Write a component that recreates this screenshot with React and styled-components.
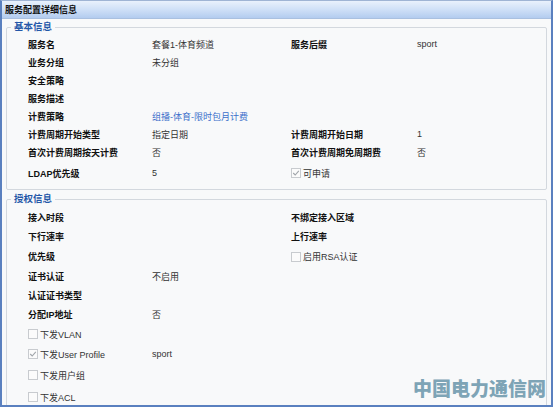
import React from 'react'
import styled, { createGlobalStyle } from 'styled-components'

const GlobalStyle = createGlobalStyle`
  html, body {
    margin: 0;
    padding: 0;
    background: #ffffff;
  }
  body {
    font-family: "Liberation Sans", "Noto Sans CJK SC", sans-serif;
    font-size: 9px;
    color: #222;
  }
`

const Frame = styled.div`
  position: relative;
  width: 553px;
  height: 407px;
  box-sizing: border-box;
  border-left: 2px solid #5a80bf;
  border-right: 2px solid #5a80bf;
  border-bottom: 2px solid #5a80bf;
  border-top: 1px solid #9fb4d4;
  background: #f8f9fa;
  overflow: hidden;
`

const TitleBar = styled.div`
  height: 17px;
  display: flex;
  align-items: center;
  padding-left: 3px;
  background: linear-gradient(to bottom, #e9f1fc 0%, #cfe0f7 50%, #b3ccef 100%);
  border-bottom: 1px solid #a9c0e0;
  font-weight: bold;
  font-size: 9px;
  color: #111;
`

const Body = styled.div`
  padding: 0 4px 0 4px;
`

const Box = styled.fieldset`
  margin: ${p => p.$top}px 0 0 0;
  padding: 0 0 ${p => p.$bottom}px 21px;
  border: 1px solid #d3d8de;
  border-radius: 2px;
  min-width: 0;
`

const Legend = styled.legend`
  padding: 0 3px;
  margin-left: -17px;
  font-weight: bold;
  font-size: 9.5px;
  line-height: 14px;
  color: #2457a8;
`

const Grid = styled.div`
  display: grid;
  grid-template-columns: 124px 139px 126px 1fr;
  padding-top: ${p => p.$top}px;
`

const Row = styled.div`
  display: contents;
`

const Cell = styled.div`
  height: ${p => p.$h}px;
  display: flex;
  align-items: center;
  white-space: nowrap;
`

const Label = styled(Cell)`
  font-weight: bold;
  color: #111;
`

const Value = styled(Cell)`
  color: #333;
`

const LinkValue = styled(Cell)`
  color: #3b6fca;
`

const CheckLine = styled(Cell)`
  color: #333;
  gap: 2px;
`

const Tick = styled.span`
  width: 10px;
  height: 10px;
  box-sizing: border-box;
  border: 1px solid #c8cbcf;
  background: #fbfbfb;
  display: inline-flex;
  align-items: center;
  justify-content: center;
`

const Check = ({ checked }) => (
  <Tick>
    {checked && (
      <svg width="8" height="8" viewBox="0 0 8 8">
        <path d="M1.2 4 L3.2 6 L6.8 1.8" fill="none" stroke="#a0a5aa" strokeWidth="1.1" />
      </svg>
    )}
  </Tick>
)

const Watermark = styled.div`
  position: absolute;
  right: 5px;
  bottom: 6px;
  font-family: "Noto Sans CJK SC", sans-serif;
  font-weight: 900;
  font-size: 19px;
  line-height: 22px;
  color: #7ea4b6;
`

const basic = [
  { h: 18, l: '服务名', v: '套餐1-体育频道', l2: '服务后缀', v2: 'sport' },
  { h: 18, l: '业务分组', v: '未分组' },
  { h: 18, l: '安全策略' },
  { h: 18, l: '服务描述' },
  { h: 18, l: '计费策略', link: '组播-体育-限时包月计费' },
  { h: 18, l: '计费周期开始类型', v: '指定日期', l2: '计费周期开始日期', v2: '1' },
  { h: 18, l: '首次计费周期按天计费', v: '否', l2: '首次计费周期免周期费', v2: '否' },
  { h: 24, l: 'LDAP优先级', v: '5', c2: { text: '可申请', checked: true } },
]

const auth = [
  { h: 19, l: '接入时段', l2: '不绑定接入区域' },
  { h: 19, l: '下行速率', l2: '上行速率' },
  { h: 21, l: '优先级', c2: { text: '启用RSA认证', checked: false } },
  { h: 19, l: '证书认证', v: '不启用' },
  { h: 19, l: '认证证书类型' },
  { h: 19, l: '分配IP地址', v: '否' },
  { h: 20, l: '', c: { text: '下发VLAN', checked: false } },
  { h: 20, l: '', c: { text: '下发User Profile', checked: true }, v: 'sport' },
  { h: 22, l: '', c: { text: '下发用户组', checked: false } },
  { h: 22, l: '', c: { text: '下发ACL', checked: false } },
]

const renderRow = (r, i) => (
  <Row key={i}>
    {r.c ? (
      <CheckLine $h={r.h}><Check checked={r.c.checked} />{r.c.text}</CheckLine>
    ) : (
      <Label $h={r.h}>{r.l}</Label>
    )}
    {r.link ? <LinkValue $h={r.h}>{r.link}</LinkValue> : <Value $h={r.h}>{r.v}</Value>}
    {r.c2 ? (
      <CheckLine $h={r.h}><Check checked={r.c2.checked} />{r.c2.text}</CheckLine>
    ) : (
      <Label $h={r.h}>{r.l2}</Label>
    )}
    <Value $h={r.h}>{r.v2}</Value>
  </Row>
)

export default function App () {
  return (
    <>
      <GlobalStyle />
      <Frame>
        <TitleBar>服务配置详细信息</TitleBar>
        <Body>
          <Box $top={1} $bottom={4}>
            <Legend>基本信息</Legend>
            <Grid $top={1}>{basic.map(renderRow)}</Grid>
          </Box>
          <Box $top={2} $bottom={20}>
            <Legend>授权信息</Legend>
            <Grid $top={2}>{auth.map(renderRow)}</Grid>
          </Box>
        </Body>
        <Watermark>中国电力通信网</Watermark>
      </Frame>
    </>
  )
}
